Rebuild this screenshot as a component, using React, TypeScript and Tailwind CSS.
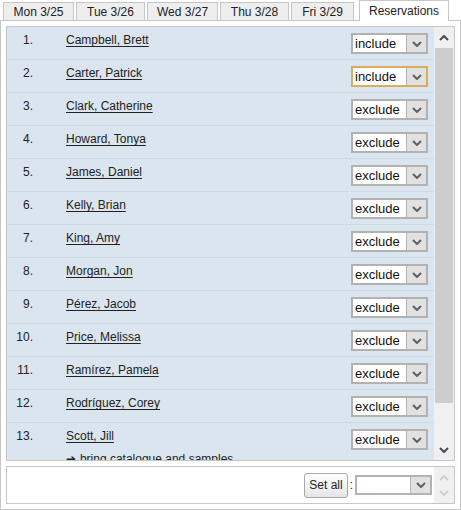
import React from "react";

const people = [
  { name: "Campbell, Brett", value: "include" },
  { name: "Carter, Patrick", value: "include", focused: true },
  { name: "Clark, Catherine", value: "exclude" },
  { name: "Howard, Tonya", value: "exclude" },
  { name: "James, Daniel", value: "exclude" },
  { name: "Kelly, Brian", value: "exclude" },
  { name: "King, Amy", value: "exclude" },
  { name: "Morgan, Jon", value: "exclude" },
  { name: "Pérez, Jacob", value: "exclude" },
  { name: "Price, Melissa", value: "exclude" },
  { name: "Ramírez, Pamela", value: "exclude" },
  { name: "Rodríguez, Corey", value: "exclude" },
  { name: "Scott, Jill", value: "exclude", note: "bring catalogue and samples" },
];

const tabs = [
  { label: "Mon 3/25", w: "w-[71px]" },
  { label: "Tue 3/26", w: "w-[69px]" },
  { label: "Wed 3/27", w: "w-[71px]" },
  { label: "Thu 3/28", w: "w-[69px]" },
  { label: "Fri 3/29", w: "w-[63px]" },
];

const Chevron = ({ up = false, color = "#555" }: { up?: boolean; color?: string }) => (
  <svg width="10" height="6" viewBox="0 0 10 6">
    <polyline
      points={up ? "1,5 5,1 9,5" : "1,1 5,5 9,1"}
      fill="none"
      stroke={color}
      strokeWidth="2"
    />
  </svg>
);

const Dropdown = ({ value, focused }: { value: string; focused?: boolean }) => (
  <div
    className={`flex h-[21px] w-[77px] border-2 bg-white ${
      focused ? "border-[#dcae5c]" : "border-[#b2b2b2]"
    }`}
  >
    <span className="flex-1 pl-[2px] text-[13px] leading-[17px] text-[#111]">{value}</span>
    <span className="flex w-[20px] items-center justify-center border-l border-[#b2b2b2] bg-[#e1e1e1]">
      <Chevron color="#606060" />
    </span>
  </div>
);

export default function App() {
  return (
    <div className="h-[510px] w-[461px] bg-white font-['Liberation_Sans',Arial,sans-serif] text-[12px] text-[#222]">
      {/* tabs */}
      <div className="flex h-[20px] items-end gap-[2px] pl-[3px]">
        {tabs.map((t) => (
          <div
            key={t.label}
            className={`flex h-[18px] ${t.w} items-center justify-center border border-b-0 border-[#c6c6c6] bg-[#eeeeee]`}
          >
            {t.label}
          </div>
        ))}
        <div className="relative z-10 -mb-px ml-[3px] flex h-[21px] w-[90px] items-center justify-center border border-b-0 border-[#c6c6c6] bg-white">
          Reservations
        </div>
      </div>

      {/* panel */}
      <div className="flex h-[490px] flex-col gap-[5px] border border-[#c6c6c6] p-[5px]">
        <div className="flex h-[435px] border border-[#c6c6c6] bg-[#dbe5f0]">
          <div className="flex-1 overflow-hidden">
            {people.map((p, i) => (
              <div
                key={p.name}
                className="flex border-b border-[#d0d8e0] pb-[5px] pt-[6px] pr-[6px]"
              >
                <div className="-mt-[2px] w-[26px] text-right">{i + 1}.</div>
                <div className="-mt-[2px] ml-[33px] flex-1">
                  <div className="underline underline-offset-2">{p.name}</div>
                  {p.note && (
                    <div className="mt-[5px] font-['DejaVu_Sans',sans-serif] text-[12px]">
                      ➔ <span className="font-['Liberation_Sans',Arial,sans-serif]">{p.note}</span>
                    </div>
                  )}
                </div>
                <Dropdown value={p.value} focused={p.focused} />
              </div>
            ))}
          </div>
          {/* scrollbar */}
          <div className="flex w-[20px] flex-col bg-[#f0f0f0]">
            <div className="flex h-[21px] items-center justify-center">
              <Chevron up color="#4a4a4a" />
            </div>
            <div className="mx-px h-[355px] bg-[#cdcdcd]" />
            <div className="flex-1" />
            <div className="flex h-[21px] items-center justify-center">
              <Chevron color="#4a4a4a" />
            </div>
          </div>
        </div>

        <div className="flex h-[38px] items-stretch border border-[#c6c6c6] bg-white">
          <div className="flex flex-1 items-center justify-end pr-[2px]">
            <button className="h-[25px] rounded-[3px] border border-[#a8a8a8] bg-gradient-to-b from-white to-[#e6e6e6] px-[4px] text-[12px] text-[#222]">
              Set all
            </button>
            <span className="mx-[2px]">:</span>
            <div className="flex h-[20px] w-[77px] border-2 border-[#b2b2b2] bg-white">
              <span className="flex-1" />
              <span className="flex w-[20px] items-center justify-center border-l border-[#b2b2b2] bg-[#e1e1e1]">
                <Chevron color="#606060" />
              </span>
            </div>
          </div>
          <div className="flex w-[20px] flex-col items-center justify-center gap-[9px] bg-[#f0f0f0]">
            <Chevron up color="#cfcfcf" />
            <Chevron color="#cfcfcf" />
          </div>
        </div>
      </div>
    </div>
  );
}
